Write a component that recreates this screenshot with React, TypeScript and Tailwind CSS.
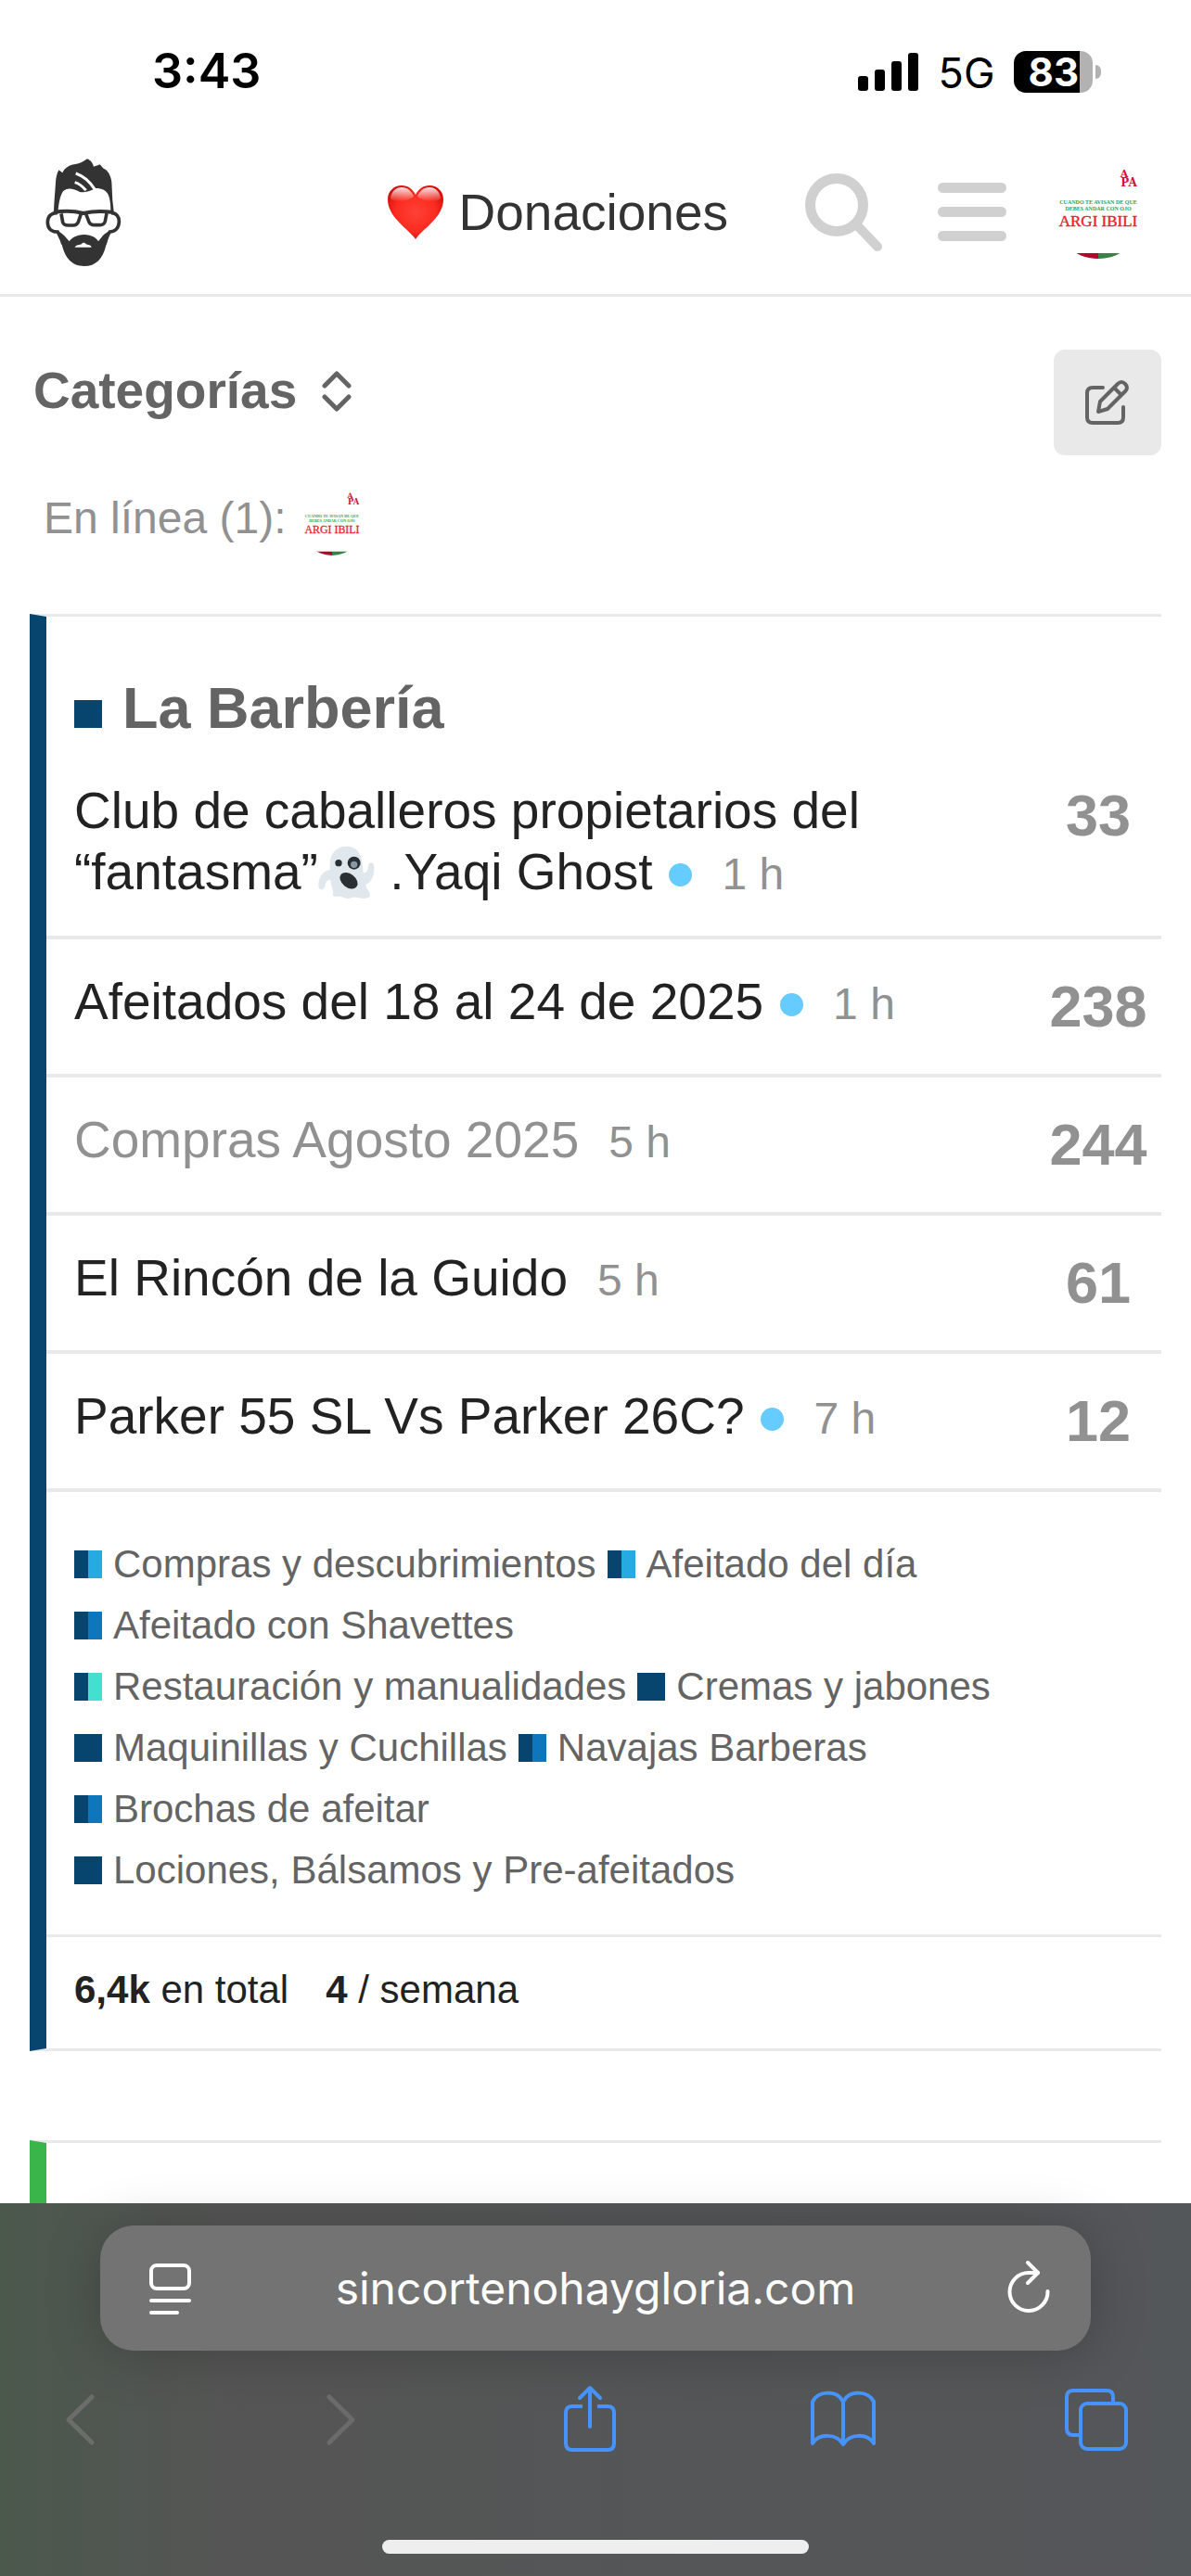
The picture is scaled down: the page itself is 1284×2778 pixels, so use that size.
import React from 'react';

interface Topic {
    title: React.ReactNode;
    age: string;
    replies: number;
    unread?: boolean;
    visited?: boolean;
}

interface Subcategory {
    name: string;
    badge: string;
}

const GhostEmoji = () => (
    <svg role="img" aria-label="fantasma" viewBox="26 36 186 174" className="inline-block h-[58px] w-[62px] align-[-11px]">
        <path
            d="M118 38c-34 0-54 24-54 58v18c-20 2-36 22-37 48 0 12 4 16 10 16 8 0 10-8 12-17 3-10 10-16 17-13 1 14 6 24 8 36 0 10-2 14 4 16 10 2 16-2 26 2 10 6 20 6 32 2 12-4 20 2 30 2 14 2 28 0 28-10 0-12-12-18-14-34 20-8 28-32 27-58-1-18-18-16-19-2-1 14-6 24-16 22-2-54-14-86-54-86z"
            fill="#e1e8ed"
        />
        <circle cx="92" cy="92" r="11" fill="#292f33" />
        <circle cx="142" cy="92" r="21" fill="#292f33" />
        <circle cx="142" cy="97" r="11" fill="#8899a6" />
        <ellipse cx="125" cy="149" rx="32" ry="22" transform="rotate(38 125 149)" fill="#292f33" />
    </svg>
);

const topics: Topic[] = [
    {
        title: (
            <>
                Club de caballeros propietarios del “fantasma”
                <GhostEmoji /> .Yaqi Ghost
            </>
        ),
        age: '1 h',
        replies: 33,
        unread: true,
    },
    { title: 'Afeitados del 18 al 24 de 2025', age: '1 h', replies: 238, unread: true },
    { title: 'Compras Agosto 2025', age: '5 h', replies: 244, visited: true },
    { title: 'El Rincón de la Guido', age: '5 h', replies: 61 },
    { title: 'Parker 55 SL Vs Parker 26C?', age: '7 h', replies: 12, unread: true },
];

const subcategories: Subcategory[] = [
    { name: 'Compras y descubrimientos', badge: 'bg-[#25aae2]' },
    { name: 'Afeitado del día', badge: 'bg-[#25aae2]' },
    { name: 'Afeitado con Shavettes', badge: 'bg-[#0e76bd]' },
    { name: 'Restauración y manualidades', badge: 'bg-[#45dfd0]' },
    { name: 'Cremas y jabones', badge: 'bg-[#08456e]' },
    { name: 'Maquinillas y Cuchillas', badge: 'bg-[#08456e]' },
    { name: 'Navajas Barberas', badge: 'bg-[#0e76bd]' },
    { name: 'Brochas de afeitar', badge: 'bg-[#0e76bd]' },
    { name: 'Lociones, Bálsamos y Pre-afeitados', badge: 'bg-[#08456e]' },
];

const Avatar = ({ className }: { className: string }) => (
    <svg role="img" aria-label="Avatar" viewBox="0 0 100 100" className={className}>
        <defs>
            <clipPath id="avatar-circle">
                <circle cx="50" cy="50" r="50" />
            </clipPath>
        </defs>
        <g textAnchor="middle" fontFamily="'Liberation Serif', serif">
            <g fill="#d0103a" fontWeight="700" fontFamily="'DejaVu Serif', serif">
                <text x="78" y="12" fontSize="11">A</text>
                <text x="83" y="22" fontSize="12">PA</text>
            </g>
            <g fill="#2f9e4f" fontWeight="700">
                <text x="50" y="41" fontSize="6">CUANDO TE AVISAN DE QUE</text>
                <text x="50" y="48" fontSize="6">DEBES ANDAR CON OJO</text>
            </g>
            <text x="50" y="65" fontSize="17" fill="#ec1c2b" stroke="#ec1c2b" strokeWidth="0.4">ARGI IBILI</text>
        </g>
        <g clipPath="url(#avatar-circle)">
            <path d="M0 94h50v6H0z" fill="#b0082c" />
            <path d="M50 94h50v6H50z" fill="#3c8048" />
        </g>
    </svg>
);

const Logo = () => (
    <svg viewBox="0 0 300 405" className="h-[135px] w-[100px]" aria-hidden="true">
        <path
            fill="#333"
            d="M54 200c2-40 4-60 6-92 1-16 4-30 10-41l12 9c6-14 18-24 42-28 14-2 26-8 38-17 10 4 16 10 21 25 5-1 10-3 20-7 6 6 9 12 12 13 12 4 24 22 26 44 1 18 2 40 3 60l4 34H238c0-20-2-40-8-54-6-12-20-20-40-20-8 2-14 8-24 10-10 3-20 4-28 2-22-14-44-14-54-2-10 14-14 40-16 64z"
        />
        <g fill="none" stroke="#fff" strokeWidth="9">
            <path d="M125 78c24 8 44 24 62 52" />
            <path d="M122 107c14 4 24 12 36 26" />
        </g>
        <g fill="none" stroke="#333">
            <path strokeWidth="11" d="M66 206c-18-2-32 10-32 30s12 32 32 31c8 14 14 24 18 40M240 206c16 0 26 12 25 30-1 18-12 30-30 31-8 12-12 24-16 40" />
            <path strokeWidth="12" d="M54 204c30-5 64-5 96 3 32-8 62-8 96-3" />
            <path strokeWidth="11" d="M78 208l5 28c2 8 8 10 18 10h16c8 0 14-6 17-13l8-24M158 209l9 24c3 7 8 12 18 12h18c10 0 15-4 17-12l5-26" />
        </g>
        <path
            fill="#333"
            d="M66 264c18 8 28 22 38 34 12-16 30-22 48-22s36 6 46 22c10-12 16-26 38-34-6 16-10 34-14 50-10 40-32 64-70 64-40 0-60-26-70-62-5-18-8-36-16-52z"
        />
        <path fill="#fff" d="M122 317c4-8 16-8 22-10 2-6 12-6 14 0 6 2 16 2 18 10z" />
    </svg>
);

const HeartEmoji = () => (
    <svg role="img" aria-label="corazón" viewBox="0 0 62 60" className="h-[60px] w-[62px]">
        <defs>
            <radialGradient id="heart-fill" cx="0.5" cy="0.5" r="0.6">
                <stop offset="0" stopColor="#ff4136" />
                <stop offset="0.6" stopColor="#fb2b20" />
                <stop offset="1" stopColor="#cf0d08" />
            </radialGradient>
            <linearGradient id="heart-shine" x1="0" y1="0" x2="0" y2="1">
                <stop offset="0" stopColor="#fff" stopOpacity="0.9" />
                <stop offset="1" stopColor="#fff" stopOpacity="0" />
            </linearGradient>
        </defs>
        <path d="M31 59C24 48 1 36 1 16 1 7 8 1 16 1c7 0 12 4 15 10C34 5 39 1 46 1c8 0 15 6 15 15 0 20-23 32-30 43z" fill="url(#heart-fill)" />
        <path d="M4 15C5 7 10 3 16 3s11 4 13 10c-6 5-20 8-25 2zM58 15c-1-8-6-12-12-12s-11 4-13 10c6 5 20 8 25 2z" fill="url(#heart-shine)" />
    </svg>
);

const StatusBar = () => (
    <div className="flex h-[141px] shrink-0 items-start justify-between pr-[97px] pl-[164px] font-[Inter,sans-serif] text-black">
        <span className="pt-[45px] text-[52px] leading-[64px] font-semibold">3:43</span>
        <div className="flex items-center pt-[53px]">
            <svg viewBox="0 0 66 46" className="h-[46px] w-[66px]" aria-hidden="true">
                <rect x="0" y="27" width="11" height="16" rx="3" />
                <rect x="18" y="20" width="11" height="23" rx="3" />
                <rect x="36" y="11" width="11" height="32" rx="3" />
                <rect x="54" y="2" width="11" height="41" rx="3" />
            </svg>
            <span className="w-[102px] pt-[3px] text-center text-[45px] leading-[46px]">5G</span>
            <div className="flex h-[45px] w-[85px] items-center justify-end rounded-[13px] bg-linear-to-r from-black from-84% to-[#b2b2b2] to-84% pr-[15px] text-[42px] leading-[45px] font-bold text-white">
                83
            </div>
            <div className="ml-[3px] h-[15px] w-[6px] rounded-r-full bg-[#b2b2b2]" />
        </div>
    </div>
);

const SiteHeader = () => (
    <header className="flex h-[179px] shrink-0 items-center border-b-[3px] border-[#e9e9e9] pr-[50px] pb-px pl-10">
        <a href="#inicio" aria-label="Sin corte no hay gloria">
            <Logo />
        </a>
        <a href="#donaciones" className="ml-auto flex items-center gap-4 text-[55px] leading-[66px] text-[#333]">
            <HeartEmoji />
            Donaciones
        </a>
        <button type="button" aria-label="Buscar" className="ml-[83px]">
            <svg viewBox="0 0 86 86" className="h-[86px] w-[86px]" fill="none" stroke="#d0d0d0" strokeLinecap="round">
                <circle cx="34" cy="35" r="28.500" strokeWidth="11" />
                <path d="M57 58l21 22" strokeWidth="10" />
            </svg>
        </button>
        <button type="button" aria-label="Menú" className="ml-[57px]">
            <svg viewBox="0 0 74 66" className="h-[66px] w-[74px]" fill="#d0d0d0">
                <rect x="0" y="1" width="74" height="11" rx="5.500" />
                <rect x="0" y="27" width="74" height="11" rx="5.500" />
                <rect x="0" y="53" width="74" height="11" rx="5.500" />
            </svg>
        </button>
        <button type="button" aria-label="Cuenta" className="ml-[49px]">
            <Avatar className="h-[100px] w-[100px]" />
        </button>
    </header>
);

const TopicRow = ({ title, age, replies, unread, visited }: Topic) => (
    <tr className="border-b-4 border-[#e9e9e9]">
        <td className="pt-[34px] pb-[33px] pl-[30px] align-top">
            <a href="#tema" className={visited ? 'text-[#919191]' : 'text-[#222]'}>
                {title}
            </a>
            {unread && <span className="ml-[18px] inline-block h-[25px] w-[25px] rounded-full bg-[#66ccff] align-[3px]" />}
            <span className="ml-8 text-5xl leading-[66px] text-[#919191]">{age}</span>
        </td>
        <td className="w-[136px] pt-[35px] pb-[35px] text-center align-top text-[63px] leading-[75px] font-bold text-[#919191]">
            {replies}
        </td>
    </tr>
);

const CategoryBox = () => (
    <section className="mt-[63px] border-y-[3px] border-l-[18px] border-y-[#e9e9e9] border-l-[#08456e]">
        <h3 className="flex items-center gap-[22px] pt-[58px] pb-1 pl-[30px] text-[63px] leading-[80px] font-bold text-[#646464]">
            <span className="mt-[13px] h-[30px] w-[30px] bg-[#08456e]" />
            <a href="#barberia">La Barbería</a>
        </h3>
        <table className="w-full border-collapse text-[55px] leading-[66px]">
            <tbody>
                {topics.map((topic) => (
                    <TopicRow key={topic.replies} {...topic} />
                ))}
            </tbody>
        </table>
        <div className="flex flex-wrap gap-x-3 pt-[45px] pr-[136px] pb-9 pl-[30px] text-[42px] leading-[66px] text-[#646464]">
            {subcategories.map(({ name, badge }) => (
                <a key={name} href="#subcategoria" className="flex items-center gap-3 whitespace-nowrap">
                    <span className="flex h-[30px] w-[30px] bg-[#08456e]">
                        <span className={`ml-auto h-full w-1/2 ${badge}`} />
                    </span>
                    {name}
                </a>
            ))}
        </div>
        <div className="flex gap-10 border-t-[3px] border-[#e9e9e9] pt-8 pb-[38px] pl-[30px] text-[42px] leading-[50px] text-[#222]">
            <span>
                <b>6,4k</b> en total
            </span>
            <span>
                <b>4</b> / semana
            </span>
        </div>
    </section>
);

const navButton = 'flex h-20 w-20 items-center justify-center';

const BrowserBar = () => (
    <footer className="z-10 flex h-[402px] shrink-0 flex-col bg-linear-to-r from-[#4b584c] via-[#555555] via-20% to-[#545759] pt-6 font-[Inter,sans-serif]">
        <div className="mx-[108px] flex h-[135px] shrink-0 items-center justify-between rounded-[36px] bg-[#737373] pr-[34px] pl-[42px] text-white shadow-[0_4px_60px_rgba(0,0,0,0.22)]">
            <button type="button" aria-label="Opciones de página">
                <svg viewBox="0 0 66 66" className="h-[66px] w-[66px]" fill="none" stroke="currentColor" strokeWidth="4" strokeLinecap="round">
                    <rect x="13" y="8" width="41" height="25" rx="6" />
                    <path d="M13 46h41M13 59h28" />
                </svg>
            </button>
            <span className="pr-2 text-5xl leading-[60px]">sincortenohaygloria.com</span>
            <button type="button" aria-label="Recargar">
                <svg viewBox="0 0 66 66" className="h-[66px] w-[66px]" fill="none" stroke="currentColor" strokeWidth="4" strokeLinecap="round" strokeLinejoin="round">
                    <path d="M43 16H33A20.500 20.500 0 1 0 53.500 36" />
                    <path d="M32 5l11 11-11 11" />
                </svg>
            </button>
        </div>
        <nav className="mt-[33px] flex shrink-0 justify-between pr-16 pl-[46px] text-[#4693ff]">
            <button type="button" aria-label="Atrás" disabled className={`${navButton} text-[#6b6d6b]`}>
                <svg viewBox="0 0 80 80" fill="none" stroke="currentColor" strokeWidth="5" strokeLinecap="round" strokeLinejoin="round">
                    <path d="M53 17L28 41.500 53 66" />
                </svg>
            </button>
            <button type="button" aria-label="Adelante" disabled className={`${navButton} text-[#6b6b6b]`}>
                <svg viewBox="0 0 80 80" fill="none" stroke="currentColor" strokeWidth="5" strokeLinecap="round" strokeLinejoin="round">
                    <path d="M35 17l25 24.500L35 66" />
                </svg>
            </button>
            <button type="button" aria-label="Compartir" className={navButton}>
                <svg viewBox="0 0 80 80" fill="none" stroke="currentColor" strokeWidth="4" strokeLinecap="round" strokeLinejoin="round">
                    <path strokeLinecap="butt" d="M35 27h-11q-7 0-7 7v33q0 7 7 7h38q7 0 7-7V34q0-7-7-7H51" />
                    <path d="M43 49V8M32 18L43 7l11 11" />
                </svg>
            </button>
            <button type="button" aria-label="Marcadores" className={navButton}>
                <svg viewBox="0 0 80 80" fill="none" stroke="currentColor" strokeWidth="4" strokeLinejoin="round">
                    <path d="M42 22C35 9 15 10 9 22v45c7-11 26-11 33 1 7-12 26-12 33-1V22C69 10 49 9 42 22zM42 22v46" />
                </svg>
            </button>
            <button type="button" aria-label="Pestañas" className={navButton}>
                <svg viewBox="0 0 80 80" fill="none" stroke="currentColor" strokeWidth="4">
                    <path d="M24 58h-7q-7 0-7-7V17q0-7 7-7h36q7 0 7 7v7" />
                    <rect x="25" y="24" width="49" height="49" rx="7" />
                </svg>
            </button>
        </nav>
        <div className="mx-auto mt-[91px] h-[15px] w-[460px] rounded-full bg-[#eee]" />
    </footer>
);

const App: React.FC = () => {
    return (
        <div className="flex h-screen flex-col overflow-hidden bg-white font-['Liberation_Sans',Arial,sans-serif]">
            <StatusBar />
            <SiteHeader />
            <main className="min-h-0 flex-1 overflow-hidden pr-8 pl-8">
                <div className="flex items-start justify-between pt-[57px] pl-1">
                    <button type="button" className="flex h-[88px] items-center gap-[26px] text-[55px] leading-[66px] font-bold text-[#646464]">
                        Categorías
                        <svg viewBox="0 0 34 46" className="h-[46px] w-[34px]" fill="none" stroke="currentColor" strokeWidth="5" strokeLinecap="round" strokeLinejoin="round">
                            <path d="M4 18L17 5l13 13M4 30l13 13 13-13" />
                        </svg>
                    </button>
                    <button type="button" aria-label="Nuevo tema" className="flex h-[114px] w-[116px] items-center justify-center rounded-xl bg-[#e9e9e9] text-[#646464]">
                        <svg viewBox="0 0 50 50" className="h-[50px] w-[50px]" fill="none" stroke="currentColor" strokeWidth="4" strokeLinecap="round" strokeLinejoin="round">
                            <path d="M20 9h-11Q3 9 3 15v26q0 6 6 6h27q6 0 6-6V30" />
                            <path d="M15 35l2-11L36 5q4-4 8 0t0 8L25 32zM32 9l8 8" />
                        </svg>
                    </button>
                </div>
                <div className="mt-[38px] flex items-start gap-[15px] pl-[15px] text-5xl leading-[60px] text-[#919191]">
                    En línea (1):
                    <Avatar className="h-[70px] w-[70px]" />
                </div>
                <CategoryBox />
                <section className="mt-24 h-[300px] border-y-[3px] border-l-[18px] border-y-[#e9e9e9] border-l-[#3ab54a]" />
            </main>
            <BrowserBar />
        </div>
    );
};

export default App;
